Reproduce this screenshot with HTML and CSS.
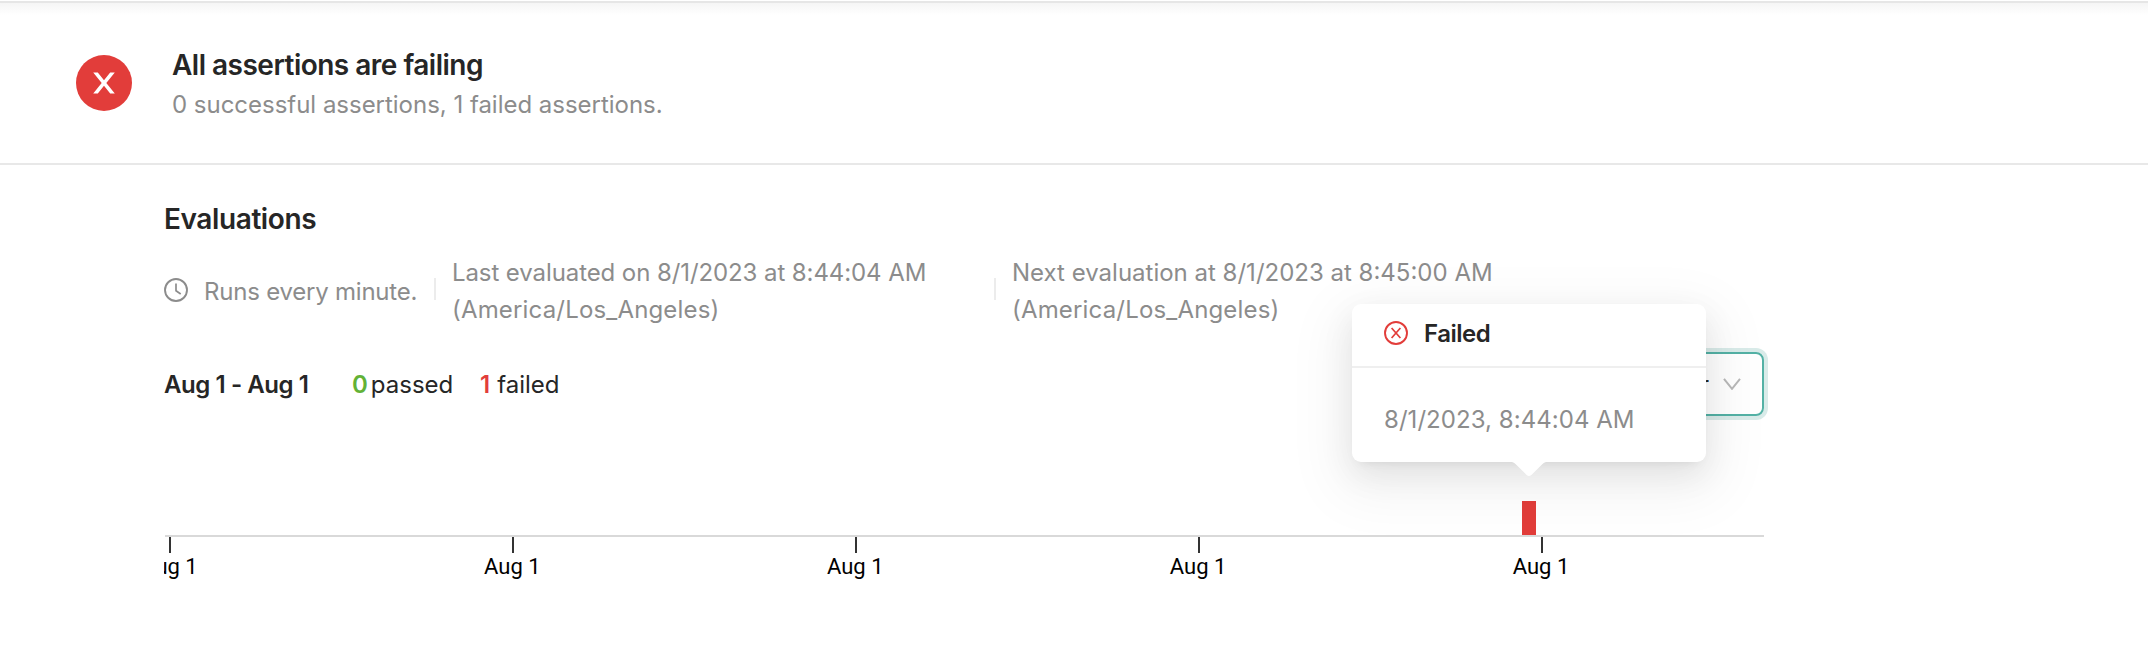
FILE: index.html
```
<!DOCTYPE html>
<html lang="en">
<head>
<meta charset="utf-8">
<title>Assertions</title>
<link rel="stylesheet" href="styles.css">
</head>
<body>
<header class="summary">
  <svg class="status-icon" viewBox="0 0 56 56"><circle cx="28" cy="28" r="28" fill="#e23d3a"/><path d="M17.200 17.500h4.600L28 25.200l6.200-7.700h4.600L30.300 28l8.500 10.500h-4.600L28 30.800l-6.200 7.700h-4.600L25.700 28z" fill="#fff"/></svg>
  <div class="summary-text">
    <h1 class="title">All assertions are failing</h1>
    <p class="subtitle">0 successful assertions, 1 failed assertions.</p>
  </div>
</header>
<main class="content">
  <h2 class="heading">Evaluations</h2>
  <div class="schedule">
    <div class="runs">
      <svg class="clock" viewBox="0 0 24 24" fill="none" stroke="#8c8c8c"><circle cx="12" cy="12" r="11" stroke-width="1.9"/><path d="M12 5.600v7.100l4.700 3.300" stroke-width="1.7"/></svg>
      <span class="runs-text">Runs every minute.</span>
    </div>
    <div class="last"><span class="last-time">Last evaluated on 8/1/2023 at 8:44:04 AM</span><br><span class="zone">(America/Los_Angeles)</span></div>
    <div class="next"><span>Next evaluation at 8/1/2023 at 8:45:00 AM</span><br><span class="zone">(America/Los_Angeles)</span></div>
  </div>
  <div class="toolbar">
    <strong class="range">Aug 1 - Aug 1</strong>
    <span class="passed"><b class="green">0</b><span class="passed-label">passed</span></span>
    <span class="failed"><b class="red">1</b><span class="failed-label">failed</span></span>
    <div class="select"><span>1 hour</span><svg class="chevron" viewBox="0 0 18 12"><path d="M1 .8l8 10 8-10" fill="none" stroke="#b8b8b8" stroke-width="2"/></svg></div>
  </div>
  <div class="chart">
    <div class="plot"><i class="bar"></i></div>
    <div class="axis">
      <div class="tick"><span>Aug 1</span></div>
      <div class="tick"><span>Aug 1</span></div>
      <div class="tick"><span>Aug 1</span></div>
      <div class="tick"><span>Aug 1</span></div>
      <div class="tick"><span>Aug 1</span></div>
    </div>
  </div>
</main>
<aside class="popover">
  <div class="pop-title">
    <svg class="pop-icon" viewBox="0 0 24 24" fill="none" stroke="#e23d3a"><circle cx="12" cy="12" r="11" stroke-width="1.9"/><path d="M7.600 7l8.800 10M16.400 7L7.600 17" stroke-width="1.7"/></svg>
    <span class="pop-label">Failed</span>
  </div>
  <div class="pop-body">8/1/2023, 8:44:04 AM</div>
  <svg class="arrow" viewBox="0 0 34 14"><path d="M0 0q2 .3 3.500 2L14.600 12.900q2.400 2.200 4.800 0L30.500 2Q32 .3 34 0z" fill="#fff"/></svg>
</aside>
</body>
</html>
```
FILE: styles.css
```
* { box-sizing: border-box; }
body { margin: 0; width: 2148px; height: 672px; overflow: hidden; background: #fff; color: #262626; font: 24px/37px Inter, sans-serif; }
h1, h2, p { margin: 0; }
span { display: inline-block; white-space: nowrap; }

.summary { height: 165px; padding: 46px 0 0 76px; display: flex; border-bottom: 2px solid #e8e8e8; background: linear-gradient(#fff 0 1px, #e6e6e6 1px 3px, #f5f5f5 3px, #fff 15px); }
.status-icon { width: 56px; height: 56px; margin-top: 9px; }
.summary-text { margin-left: 40px; }
.title, .heading { font-size: 28px; line-height: 40px; font-weight: 600; }
.title { letter-spacing: -.51px; line-height: 39px; }
.subtitle { line-height: 39px; color: #8c8c8c; letter-spacing: -.02px; }

.content { width: 1600px; margin-left: 164px; }
.heading { padding-top: 34px; height: 88px; letter-spacing: -.4px; }
.schedule { display: flex; height: 76px; color: #8c8c8c; }
.runs { width: 270px; display: flex; align-items: center; }
.clock { width: 24px; height: 24px; margin: -2px 16px 0 0; }
.runs-text { letter-spacing: -.22px; margin-top: 1px; }
.last, .next { position: relative; padding: 1px 0 0 18px; }
.last { width: 560px; }
.last-time { letter-spacing: -.09px; }
.zone { letter-spacing: .17px; }
.last::before, .next::before { content: ""; position: absolute; left: 0; top: 25px; width: 2px; height: 22px; background: #ececec; }
.toolbar { display: flex; align-items: center; height: 64px; margin-top: 23px; }
.range { width: 188px; font-weight: 600; letter-spacing: -.42px; padding-top: 1px; }
.passed, .failed { padding-top: 1px; }
.passed { width: 128px; }
.passed-label { margin-left: 3px; }
.failed-label { margin-left: 7px; }
.green { color: #62b236; font-weight: 600; }
.red { color: #e23d3a; font-weight: 600; }
.select { margin-left: auto; width: 220px; height: 64px; border: 2px solid #53b1a5; border-radius: 8px; box-shadow: 0 0 0 4px #d9ebe9; display: flex; align-items: center; justify-content: flex-end; padding-right: 21px; }
.chevron { width: 18px; height: 12px; margin-left: 14px; }
.chart { margin-top: 85px; overflow: hidden; }
.plot { height: 36px; margin-left: 1px; border-bottom: 2px solid #d9d9d9; display: flex; align-items: flex-end; }
.bar { width: 14px; height: 34px; margin-left: 1357px; background: #e23d3a; }
.axis { display: flex; margin-left: -165px; width: 1715px; height: 60px; }
.tick { flex: 0 0 342.9px; display: flex; flex-direction: column; align-items: center; color: #000; font: 22px/28px Roboto, sans-serif; }
.tick span { margin-left: -2px; }
.tick::before { content: ""; width: 2px; height: 16px; background: #333; }

.popover { position: absolute; left: 1352px; top: 304px; width: 354px; height: 158px; border-radius: 9px; background: #fff; box-shadow: 0 6px 12px -8px rgba(0,0,0,.12), 0 12px 32px rgba(0,0,0,.08), 0 18px 56px 16px rgba(0,0,0,.05); }
.pop-title { height: 64px; padding: 0 32px 4px; display: flex; align-items: center; border-bottom: 2px solid #efefef; font-weight: 600; }
.pop-icon { width: 24px; height: 24px; margin-right: 16px; }
.pop-label { letter-spacing: -.5px; padding-top: 1px; }
.pop-body { padding: 33px 32px; color: #8c8c8c; letter-spacing: .05px; }
.arrow { position: absolute; left: 160px; top: 158px; width: 34px; height: 14px; }
```
